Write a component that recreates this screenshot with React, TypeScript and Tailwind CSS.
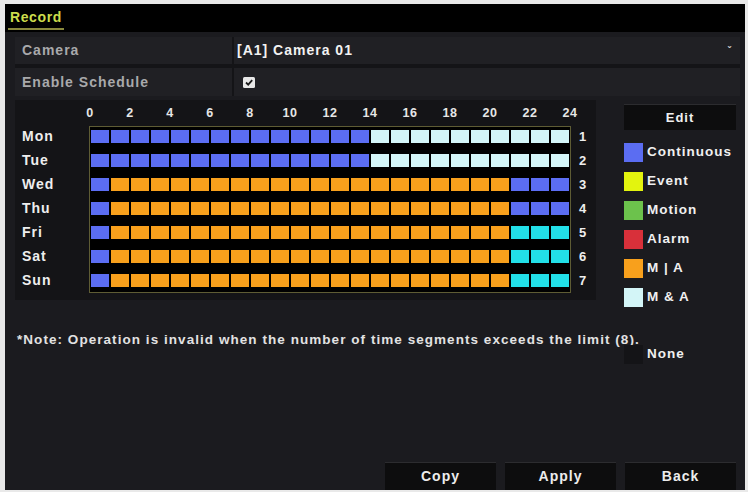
import { FunctionComponent } from "react";

type Seg = [string, number];

const BLUE = "bg-[#5b6df2]";
const ORANGE = "bg-[#f8a01c]";
const PALE = "bg-[#d3f5f7]";
const CYAN = "bg-[#22dfe8]";

const days: { name: string; segs: Seg[] }[] = [
  { name: "Mon", segs: [[BLUE, 14], [PALE, 10]] },
  { name: "Tue", segs: [[BLUE, 14], [PALE, 10]] },
  { name: "Wed", segs: [[BLUE, 1], [ORANGE, 20], [BLUE, 3]] },
  { name: "Thu", segs: [[BLUE, 1], [ORANGE, 20], [BLUE, 3]] },
  { name: "Fri", segs: [[BLUE, 1], [ORANGE, 20], [CYAN, 3]] },
  { name: "Sat", segs: [[BLUE, 1], [ORANGE, 20], [CYAN, 3]] },
  { name: "Sun", segs: [[BLUE, 1], [ORANGE, 20], [CYAN, 3]] },
];

const legend: { label: string; color: string }[] = [
  { label: "Continuous", color: "bg-[#5b6df2]" },
  { label: "Event", color: "bg-[#e3f40e]" },
  { label: "Motion", color: "bg-[#6cc24c]" },
  { label: "Alarm", color: "bg-[#d8303a]" },
  { label: "M | A", color: "bg-[#f8a01c]" },
  { label: "M & A", color: "bg-[#d3f5f7]" },
];

const hours = [0, 2, 4, 6, 8, 10, 12, 14, 16, 18, 20, 22, 24];

const cellsOf = (segs: Seg[]): string[] =>
  segs.flatMap(([c, n]) => Array.from({ length: n }, () => c));

const Button: FunctionComponent<{ label: string }> = ({ label }) => (
  <div className="w-[111px] h-[28px] flex items-center justify-center bg-[#0d0d0e] border-t border-[#2c2c2f] text-[14px] font-bold text-[#ececec]">
    {label}
  </div>
);

const Schedule: FunctionComponent = () => (
  <div className="h-[200px] bg-[#141417] flex flex-col">
    <div className="h-[26px] flex items-center pl-[55px] text-[12.5px] font-bold tracking-[0.5px] text-[#e6e6e6]">
      {hours.map((h) => (
        <div key={h} className="w-[40px] text-center">
          {h}
        </div>
      ))}
    </div>
    <div className="flex">
      <div className="w-[74px] pl-[7px] pt-[4px] flex flex-col gap-[11px]">
        {days.map((d) => (
          <div key={d.name} className="h-[13px] flex items-center text-[14px] font-bold text-[#eeeeee]">
            {d.name}
          </div>
        ))}
      </div>
      <div className="border border-[#5e5c34] bg-black pt-[3px] pb-[5px] flex flex-col gap-[11px]">
        {days.map((d) => (
          <div key={d.name} className="flex h-[13px]">
            {cellsOf(d.segs).map((c, i) => (
              <div key={i} className="w-[20px] h-[13px] px-[1px]">
                <div className={`h-full ${c}`} />
              </div>
            ))}
          </div>
        ))}
      </div>
      <div className="pl-[8px] pt-[4px] flex flex-col gap-[11px]">
        {days.map((d, i) => (
          <div key={d.name} className="h-[13px] flex items-center text-[13px] font-bold text-[#eeeeee]">
            {i + 1}
          </div>
        ))}
      </div>
    </div>
  </div>
);

export default function App() {
  return (
    <div
      className="w-[748px] h-[492px] bg-[#e9e9e9] pt-[4px] pl-[5px] pr-[3px] pb-[2px] tracking-[1px]"
      style={{ fontFamily: '"Liberation Sans", Arial, sans-serif' }}
    >
      <div className="h-full flex flex-col bg-[#1b1b1f]">
        <div className="h-[28px] bg-black pl-[3px] flex items-start">
          <div className="mt-[5px] flex flex-col">
            <span className="px-[2px] text-[14px] font-bold tracking-[0.6px] text-[#cddc4c] leading-[16px]">Record</span>
            <div className="mt-[3px] h-[2px] bg-[#8a8a3e]" />
          </div>
        </div>
        <div className="flex-1 flex flex-col pl-[10px] pr-[5px] pt-[5px]">
          <div className="h-[27px] flex bg-[#202024]">
            <div className="w-[217px] pl-[7px] flex items-center text-[14px] font-bold text-[#a9a9ab]">Camera</div>
            <div className="w-[2px] bg-[#141417]" />
            <div className="flex-1 pl-[3px] pr-[8px] flex items-center justify-between text-[14px] font-bold text-[#f2f2f2]">
              <span>[A1] Camera 01</span>
              <span className="text-[10px] text-[#cfcfcf]">&#711;</span>
            </div>
          </div>
          <div className="h-[4px] bg-[#141417]" />
          <div className="h-[28px] flex bg-[#202024]">
            <div className="w-[217px] pl-[7px] flex items-center text-[14px] font-bold text-[#a9a9ab]">Enable Schedule</div>
            <div className="w-[2px] bg-[#141417]" />
            <div className="flex-1 pl-[9px] flex items-center">
              <svg width="12" height="11" viewBox="0 0 12 11">
                <rect x="0" y="0" width="12" height="11" rx="1.5" fill="#e8e8e8" />
                <path d="M3 5.5 L5.2 7.6 L9.2 3.2" stroke="#1a1a1a" strokeWidth="1.8" fill="none" />
              </svg>
            </div>
          </div>
          <div className="flex mt-[4px]">
            <div className="w-[581px] flex flex-col">
              <Schedule />
              <div className="mt-[32px] h-[16px] flex items-center pl-[2px] whitespace-nowrap text-[13.5px] font-bold tracking-[1.05px] text-[#e2e2e2]">
                *Note: Operation is invalid when the number of time segments exceeds the limit (8).
              </div>
            </div>
            <div className="ml-[28px] w-[112px] flex flex-col pt-[4px]">
              <div className="h-[26px] flex items-center justify-center bg-[#0d0d0e] border-t border-[#2c2c2f] text-[13px] font-bold text-[#f0f0f0]">
                Edit
              </div>
              <div className="mt-[8px] flex flex-col">
                {legend.map((l) => (
                  <div key={l.label} className="h-[29px] flex items-center gap-[4px]">
                    <div className={`w-[19px] h-[19px] ${l.color}`} />
                    <span className="text-[13.5px] font-bold text-[#f0f0f0]">{l.label}</span>
                  </div>
                ))}
                <div className="mt-[28px] h-[29px] flex items-center gap-[4px]">
                  <div className="w-[19px] h-[19px] bg-[#141417]" />
                  <span className="text-[13.5px] font-bold text-[#f0f0f0]">None</span>
                </div>
              </div>
            </div>
          </div>
          <div className="mt-auto flex justify-end gap-[9px] pr-[4px]">
            <Button label="Copy" />
            <Button label="Apply" />
            <Button label="Back" />
          </div>
        </div>
      </div>
    </div>
  );
}
